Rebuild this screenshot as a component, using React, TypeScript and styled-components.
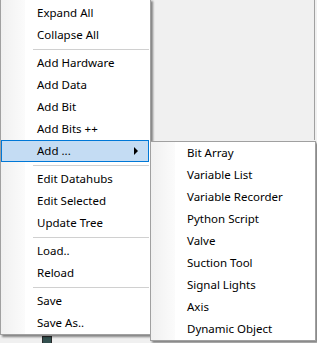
import React from 'react';
import styled, { createGlobalStyle } from 'styled-components';

const GlobalStyle = createGlobalStyle`
  html, body {
    margin: 0;
    padding: 0;
    background: #f0f0f0;
    overflow: hidden;
  }
`;

const Screen = styled.div`
  position: relative;
  width: 317px;
  height: 343px;
  overflow: hidden;
  background: #f0f0f0;
  font-family: 'Segoe UI', 'Noto Sans', sans-serif;
  font-size: 11.5px;
  color: #000;
`;

// bits of the app window that peek out behind the popup
const PanelEdge = styled.div`
  position: absolute;
  top: 0;
  left: 314px;
  width: 1px;
  height: 140px;
  background: #a0a0a0;
`;

const TreeStub = styled.div`
  position: absolute;
  left: 42px;
  top: 336px;
  width: 8px;
  height: 10px;
  border: 1px solid #2b2b2b;
  background: #33504f;
`;

const Menu = styled.div<{ $top: number; $left: number; $width: number; $padTop: number }>`
  position: absolute;
  top: ${p => p.$top}px;
  left: ${p => p.$left}px;
  width: ${p => p.$width}px;
  box-sizing: border-box;
  border: 1px solid #a0a0a0;
  padding: ${p => p.$padTop}px 1px 0 0;
  background:
    linear-gradient(to right, #f0f0f0 0, #fbfbfb 24px, #fff 24px) no-repeat;
  box-shadow: 2px 2px 2px rgba(0, 0, 0, 0.45);
  display: flex;
  flex-direction: column;
`;

const Item = styled.div<{ $active?: boolean }>`
  height: 22px;
  box-sizing: border-box;
  display: flex;
  align-items: center;
  justify-content: space-between;
  padding: 0 10px 1px 35px;
  white-space: nowrap;
  border: 1px solid ${p => (p.$active ? '#0078d7' : 'transparent')};
  background: ${p => (p.$active ? '#c4dcf3' : 'transparent')};
`;

const Arrow = styled.span`
  width: 0;
  height: 0;
  margin-top: 1px;
  border-left: 4px solid #000;
  border-top: 4px solid transparent;
  border-bottom: 4px solid transparent;
`;

const Separator = styled.div`
  height: 6px;
  display: flex;
  align-items: center;
  padding-left: 32px;
  &::after {
    content: '';
    flex: 1;
    height: 1px;
    background: #d0d0d0;
  }
`;

type Entry = string | null;

const mainEntries: Entry[] = [
  'Expand All',
  'Collapse All',
  null,
  'Add Hardware',
  'Add Data',
  'Add Bit',
  'Add Bits ++',
  'Add ...',
  null,
  'Edit Datahubs',
  'Edit Selected',
  'Update Tree',
  null,
  'Load..',
  'Reload',
  null,
  'Save',
  'Save As..',
];

const subEntries = [
  'Bit Array',
  'Variable List',
  'Variable Recorder',
  'Python Script',
  'Valve',
  'Suction Tool',
  'Signal Lights',
  'Axis',
  'Dynamic Object',
];

export default function App() {
  return (
    <>
      <GlobalStyle />
      <Screen>
        <PanelEdge />
        <TreeStub />
        <Menu $top={-1} $left={0} $width={151} $padTop={2}>
          {mainEntries.map((e, i) =>
            e === null ? (
              <Separator key={i} />
            ) : (
              <Item key={i} $active={e === 'Add ...'}>
                <span>{e}</span>
                {e === 'Add ...' && <Arrow />}
              </Item>
            )
          )}
        </Menu>
        <Menu $top={141} $left={150} $width={166} $padTop={0}>
          {subEntries.map(e => (
            <Item key={e}>
              <span>{e}</span>
            </Item>
          ))}
        </Menu>
      </Screen>
    </>
  );
}
